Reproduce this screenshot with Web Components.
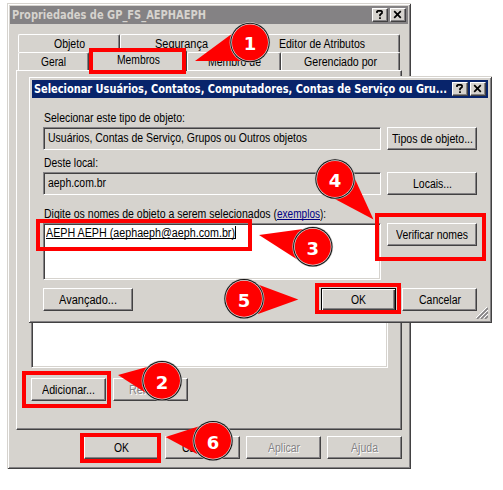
<!DOCTYPE html>
<html lang="pt-BR">
<head>
<meta charset="utf-8">
<title>Propriedades de GP_FS_AEPHAEPH</title>
<style>
html,body{margin:0;width:503px;height:490px;background:#fff;overflow:hidden}
</style>
</head>
<body>
<directory-screen></directory-screen>
<script>
const define = (name, html, setup) => {
  const tpl = document.createElement('template');
  tpl.innerHTML = html;
  customElements.define(name, class extends HTMLElement {
    connectedCallback() {
      if (this.shadowRoot) return;
      this.attachShadow({mode: 'open'}).append(tpl.content.cloneNode(true));
      if (setup) setup(this, this.shadowRoot);
    }
  });
};

// Text squeezed horizontally to the width given in the "w" attribute.
define('ui-text', `<style>
:host{display:block;flex:none;height:14px;line-height:14px;white-space:pre;font:12.3px/14px "Liberation Sans",Arial,sans-serif}
:host([bold]){font:bold 11.5px/14px "DejaVu Sans",Verdana,sans-serif}
span{display:inline-block;transform-origin:0 50%}
:host([underline]) span{text-decoration:underline;text-decoration-thickness:1px;text-underline-offset:1px;text-decoration-skip-ink:none}
</style><span><slot></slot></span>`, (el, root) => {
  const w = +el.getAttribute('w'), s = root.querySelector('span');
  el.style.width = w + 'px';
  s.style.transform = `scaleX(${w / s.getBoundingClientRect().width})`;
});

define('ui-button', `<style>
:host{display:flex;box-sizing:border-box;flex:none;width:75px;height:23px;align-items:center;justify-content:center;background:#d6d3ce;color:#000;
border:1px solid;border-color:#fff #424142 #424142 #fff;box-shadow:inset -1px -1px #848284}
:host([wide]){width:90px}
:host([disabled]){color:#848284;text-shadow:1px 1px #fff}
:host([default]){border-color:#000;box-shadow:inset 1px 1px #fff,inset -1px -1px #424142,inset -2px -2px #848284}
</style><slot></slot>`);

define('caption-button', `<style>
:host{display:block;box-sizing:border-box;flex:none;width:16px;height:14px;background:#d6d3ce;border:1px solid;border-color:#fff #424142 #424142 #fff;box-shadow:inset -1px -1px #848284}
svg{display:block}svg path{fill:none;stroke:#000;stroke-width:1.7}
:host([kind=help]) .x,:host([kind=close]) .q{display:none}
</style><svg width="14" height="12" viewBox="0 0 14 12"><path class="x" d="M3.2 2.2l6.6 6.6M9.8 2.2l-6.6 6.6"/><path class="q" d="M4 4V2.5L5 1.8H8L9 2.5V4L7 5.8V7.2M7 8.2v1.8"/></svg>`);

define('ui-window', `<style>
:host{display:block;position:absolute;isolation:isolate;box-sizing:border-box;background:#d6d3ce;padding:3px;
box-shadow:inset 1px 1px #d6d3ce,inset -1px -1px #424142,inset 2px 2px #fff,inset -2px -2px #848284}
:host([sizable]){padding:4px}
header{display:flex;align-items:center;height:18px;background:#848284;color:#d6d3ce;padding:0 2px;box-sizing:border-box}
:host([active]) header{background:#08246b;color:#fff}
nav{margin-left:auto;display:flex;gap:2px}
</style><header><slot name="title"></slot><nav><caption-button kind="help"></caption-button><caption-button kind="close"></caption-button></nav></header><slot></slot>`);

define('ui-tab', `<style>
:host{display:flex;box-sizing:border-box;height:18px;justify-content:center;align-items:center;background:#d6d3ce;padding-top:1px;
border:solid;border-width:1px 1px 0;border-color:#fff #424142 #fff #fff;border-radius:2px 2px 0 0;box-shadow:inset -1px 0 #848284}
:host([selected]){height:21px;margin-top:-2px;padding-bottom:3px;z-index:1}
</style><slot></slot>`);

define('ui-field', `<style>
:host{display:flex;box-sizing:border-box;width:338px;height:23px;padding:3px 4px;border:1px solid;border-color:#848284 #fff #fff #848284;
box-shadow:inset 1px 1px #424142,inset -1px -1px #d6d3ce}
:host([edit]){background:#fff;height:57px;padding:2px 2px}
</style><slot></slot>`);

define('red-frame', `<style>
:host{position:absolute;display:block;box-sizing:border-box;border:4px solid #f00}
</style>`, el => {
  const [x, y, w, h] = el.getAttribute('box').split(' ');
  el.style.cssText = `left:${x}px;top:${y}px;width:${w}px;height:${h}px`;
});

// Numbered disc with a pointer; "at" is the disc centre, "wedge" the pointer polygon.
define('step-pin', `<style>
:host{position:absolute;inset:0;display:block}svg{display:block}
text{font:bold 18px "DejaVu Sans",Verdana,sans-serif;fill:#fff;text-anchor:middle}
</style><svg width="503" height="490"><polygon fill="#f00"/><g>
<circle r="20.4" fill="#c8c6c4"/><circle r="19.7" fill="#111"/><circle r="18.7" fill="#ddd"/><circle r="18" fill="#f00"/><text y="7.8"></text></g></svg>`, (el, root) => {
  root.querySelector('g').setAttribute('transform', `translate(${el.getAttribute('at')})`);
  root.querySelector('polygon').setAttribute('points', el.getAttribute('wedge'));
  root.querySelector('text').textContent = el.getAttribute('n');
});

define('group-properties', `<style>
:host{display:block}
.tabs{margin:10px 8px 0}
.row{display:grid}.r1{grid-template-columns:102px 123px 157px}.r2{grid-template-columns:71px 98px 94px 119px}
.panel{box-sizing:border-box;width:386px;height:360px;margin-left:6px;padding:19px 0 0 14px;display:flex;flex-direction:column;gap:10px;
border:1px solid;border-color:#fff #424142 #424142 #fff;box-shadow:inset -1px -1px #848284}
ui-field{width:357px;height:278px}
.members{display:flex;gap:7px}
footer{display:flex;gap:6px;margin:6px 0 0 74px}
</style>
<div class="tabs"><div class="row r1"><ui-tab><ui-text w="31">Objeto</ui-text></ui-tab><ui-tab><ui-text w="53">Segurança</ui-text></ui-tab><ui-tab><ui-text w="86">Editor de Atributos</ui-text></ui-tab></div>
<div class="row r2" style="height:18px"><ui-tab><ui-text w="25">Geral</ui-text></ui-tab><ui-tab selected><ui-text w="43">Membros</ui-text></ui-tab><ui-tab><ui-text w="53">Membro de</ui-text></ui-tab><ui-tab><ui-text w="73">Gerenciado por</ui-text></ui-tab></div></div>
<div class="panel"><ui-field edit></ui-field>
<div class="members"><ui-button><ui-text w="53">Adicionar...</ui-text></ui-button><ui-button disabled><ui-text w="44">Remover</ui-text></ui-button></div></div>
<footer><ui-button><ui-text w="15">OK</ui-text></ui-button><ui-button><ui-text w="42">Cancelar</ui-text></ui-button><ui-button disabled><ui-text w="32">Aplicar</ui-text></ui-button><ui-button disabled><ui-text w="27">Ajuda</ui-text></ui-button></footer>`);

define('object-picker', `<style>
:host{display:block;padding:13px 11px 0;height:221px;box-sizing:border-box;position:relative}
.grid{display:grid;grid-template-columns:338px 90px;column-gap:6px;grid-template-rows:16px 23px 22px 23px 28px 57px}
.grid>ui-text,.line{grid-column:1/3;align-self:end;padding-left:1px}
.grid>.low{padding-bottom:2px}
.line{display:flex;padding-bottom:2px}
.link{color:#000084}
.caret{width:1px;height:13px;background:#000}
footer{display:flex;gap:6px;margin-top:8px}
footer>:first-child{margin-right:auto}
.grip{position:absolute;right:0;bottom:0}
</style>
<div class="grid">
<ui-text class="low" w="141">Selecionar este tipo de objeto:</ui-text>
<ui-field><ui-text w="259">Usuários, Contas de Serviço, Grupos ou Outros objetos</ui-text></ui-field><ui-button wide><ui-text w="81">Tipos de objeto...</ui-text></ui-button>
<ui-text class="low" w="54">Deste local:</ui-text>
<ui-field><ui-text w="58">aeph.com.br</ui-text></ui-field><ui-button wide><ui-text w="39">Locais...</ui-text></ui-button>
<div class="line"><ui-text w="233">Digite os nomes de objeto a serem selecionados (</ui-text><ui-text class="link" underline w="43">exemplos</ui-text><ui-text w="6">):</ui-text></div>
<ui-field edit><ui-text underline w="189">AEPH AEPH (aephaeph@aeph.com.br)</ui-text><span class="caret"></span></ui-field><ui-button wide><ui-text w="72">Verificar nomes</ui-text></ui-button>
</div>
<footer><ui-button wide><ui-text w="58">Avançado...</ui-text></ui-button><ui-button default><ui-text w="15">OK</ui-text></ui-button><ui-button><ui-text w="42">Cancelar</ui-text></ui-button></footer>
<svg class="grip" width="12" height="12"><path d="M1 12L12 1M5 12L12 5M9 12L12 9" stroke="#848284" stroke-width="1.6"/><path d="M0 11L11 0M4 11L12 3M8 11L12 7" stroke="#fff"/></svg>`);

define('directory-screen', `<style>
:host{display:block;position:relative;width:503px;height:490px;overflow:hidden;background:#fff}
.props{left:7px;top:3px;width:404px;height:466px}
.picker{left:28px;top:76px;width:464px;height:247px}
</style>
<ui-window class="props"><ui-text slot="title" bold w="194">Propriedades de GP_FS_AEPHAEPH</ui-text><group-properties></group-properties></ui-window>
<red-frame box="89 48 97 26"></red-frame>
<ui-window class="picker" active sizable><ui-text slot="title" bold w="413">Selecionar Usuários, Contatos, Computadores, Contas de Serviço ou Gru...</ui-text><object-picker></object-picker></ui-window>
<red-frame box="22 371 89 37"></red-frame><red-frame box="36 219 216 32"></red-frame><red-frame box="375 213 111 48"></red-frame><red-frame box="315 283 86 31"></red-frame><red-frame box="80 433 81 30"></red-frame>
<step-pin n="1" at="250 42.5" wedge="195,61 233,33 245,61"></step-pin>
<step-pin n="2" at="162 380.7" wedge="118,375 149,366.5 146,393"></step-pin>
<step-pin n="3" at="312.8 246.7" wedge="259,235 303,229 298,260"></step-pin>
<step-pin n="4" at="335 179" wedge="373.5,219.5 355,179 333,198"></step-pin>
<step-pin n="5" at="244 298.7" wedge="298.3,299.5 258,284.5 258,314"></step-pin>
<step-pin n="6" at="213 440.7" wedge="165.5,437 200,426 197,454"></step-pin>`);
</script>
</body>
</html>
